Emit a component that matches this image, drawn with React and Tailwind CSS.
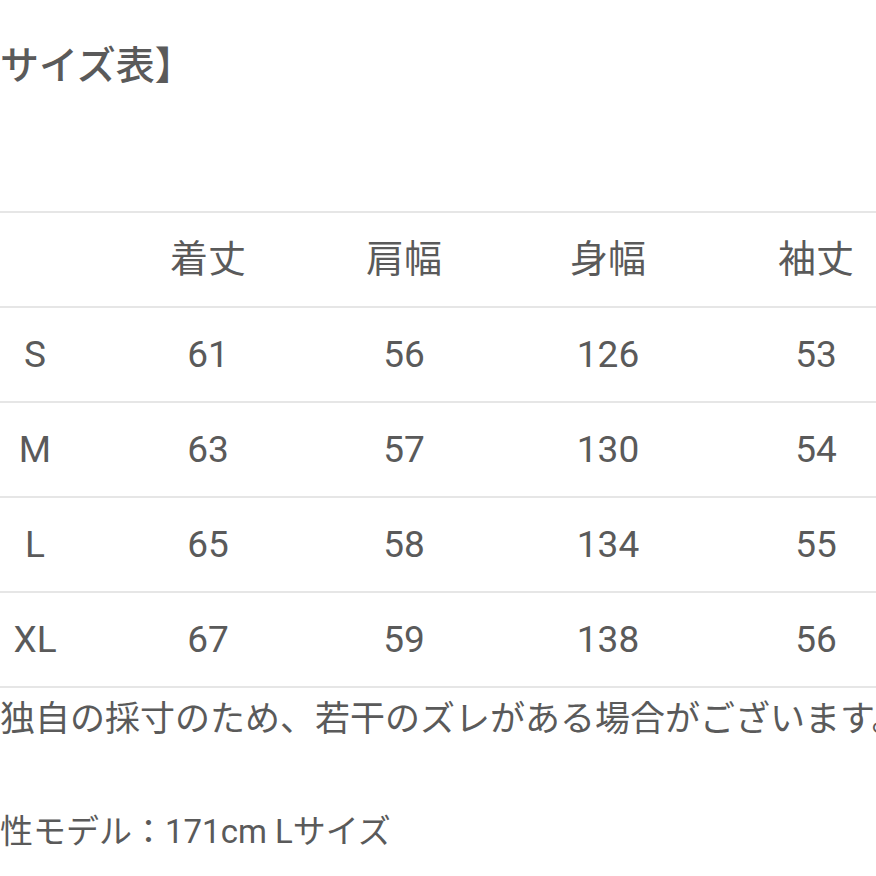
const sizes = [
  { size: "S", values: [61, 56, 126, 53] },
  { size: "M", values: [63, 57, 130, 54] },
  { size: "L", values: [65, 58, 134, 55] },
  { size: "XL", values: [67, 59, 138, 56] },
];

const headers = ["着丈", "肩幅", "身幅", "袖丈"];

const cols = "grid grid-cols-[140px_206px_186px_222px_194px]";

export default function App() {
  return (
    <div
      className="w-[876px] h-[876px] overflow-hidden bg-white text-[#5a5a5a]"
      style={{ fontFamily: 'Roboto, "Noto Sans CJK JP", sans-serif' }}
    >
      <div className="ml-[-35px] w-[950px]">
        <h2 className="pt-[46px] ml-[-4px] text-[39px] leading-[40px] font-medium">【サイズ表】</h2>

        <div className="mt-[125px] border-b-2 border-[#e6e6e6]">
          <div className={`${cols} h-[95px] items-center border-t-2 border-[#e6e6e6] text-[38px]`}>
            <div />
            {headers.map((h) => (
              <div key={h} className="text-center">{h}</div>
            ))}
          </div>
          {sizes.map((row) => (
            <div
              key={row.size}
              className={`${cols} h-[95px] items-center border-t-2 border-[#e6e6e6] text-[37px]`}
            >
              <div className="text-center">{row.size}</div>
              {row.values.map((v, i) => (
                <div key={i} className="text-center">{v}</div>
              ))}
            </div>
          ))}
        </div>

        <p className="mt-[12px] ml-[-70px] text-[35px] leading-[40px] whitespace-nowrap">
          ※当店独自の採寸のため、若干のズレがある場合がございます。
        </p>
        <p className="mt-[72px] ml-[2px] text-[33px] leading-[40px] whitespace-nowrap">
          男性モデル：171cm Lサイズ
        </p>
      </div>
    </div>
  );
}
